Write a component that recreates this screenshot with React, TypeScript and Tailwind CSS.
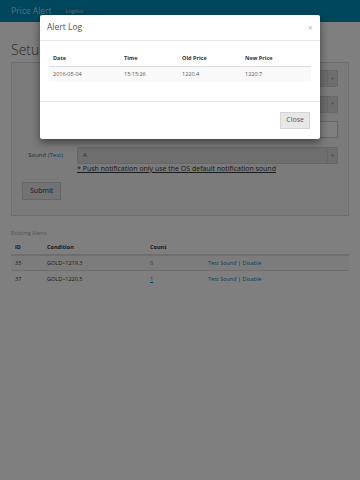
import React from "react"

const alerts = [
  { id: "35", cond: "GOLD<1219.3", count: "0" },
  { id: "37", cond: "GOLD>1220.5", count: "1" },
]

const Select = ({ value = "" }: { value?: string }) => (
  <div className="h-[17px] flex items-center justify-between bg-[#dcdcdc] border border-[#cfcfcf] rounded-[2px] pl-[5px] text-[6px] text-[#555]">
    <span>{value}</span>
    <span className="h-full w-[10px] flex items-center justify-center border-l border-[#cfcfcf] text-[4px] text-[#999]">▼</span>
  </div>
)

const Row = ({ label, children }: { label: React.ReactNode; children: React.ReactNode }) => (
  <div className="grid grid-cols-[45px_1fr] gap-[10px] items-center">
    <div className="text-right text-[6px] text-[#555] pr-[4px]">{label}</div>
    {children}
  </div>
)

export default function App() {
  return (
    <div className="relative w-[360px] h-[480px] overflow-hidden bg-white font-['Open_Sans',sans-serif]">
      <div className="h-[22px] bg-[#008cba] flex items-center px-[11px] gap-[14px]">
        <span className="text-[8.5px] text-white/70">Price Alert</span>
        <span className="text-[5.5px] text-white/70">Logout</span>
      </div>

      <div className="px-[11px]">
        <h1 className="text-[14px] font-light text-[#555] mt-[21px] mb-[5px] leading-none">Setup</h1>

        <div className="border border-[#ddd] bg-[#f6f6f6] px-[10px] pt-[7px] pb-[15px] flex flex-col gap-[8.7px]">
          <Row label=""><Select value="GOLD" /></Row>
          <Row label="Criteria"><Select value="<" /></Row>
          <Row label="Trigger"><div className="h-[17px] bg-white border border-[#ccc]" /></Row>
          <div className="grid grid-cols-[45px_1fr] gap-[10px]">
            <div className="text-right text-[6px] text-[#555] pr-[4px] pt-[4px]">
              Sound <span className="text-[#008cba]">(Test)</span>
            </div>
            <div className="flex flex-col">
              <Select value="A" />
              <span className="text-[7px] text-[#333] underline leading-[9px]">* Push notification only use the OS default notification sound</span>
            </div>
          </div>
          <div className="flex">
            <button className="h-[18px] px-[7px] bg-[#e7e7e7] border border-[#ccc] text-[7px] text-[#333] leading-none">Submit</button>
          </div>
        </div>

        <div className="mt-[14px] text-[5.5px] text-[#aaa] leading-[7px]">Existing Alerts</div>
        <table className="w-full mt-[4px] text-[5.5px] text-[#333] border-collapse">
          <thead>
            <tr className="border-b-2 border-[#ddd] h-[14px] text-left font-bold">
              <th className="pl-[4px] w-[32px]">ID</th>
              <th className="pl-[4px] w-[103px]">Condition</th>
              <th className="pl-[4px] w-[58px]">Count</th>
              <th></th>
            </tr>
          </thead>
          <tbody>
            {alerts.map((a, i) => (
              <tr key={a.id} className={`h-[16px] border-t border-[#ddd] ${i === 0 ? "bg-[#f9f9f9]" : ""}`}>
                <td className="pl-[4px]">{a.id}</td>
                <td className="pl-[4px]">{a.cond}</td>
                <td className={`pl-[4px] text-[#008cba] ${i === 1 ? "underline" : ""}`}>{a.count}</td>
                <td className="pl-[4px] text-[#008cba]">Test Sound <span className="text-[#333]">|</span> Disable</td>
              </tr>
            ))}
          </tbody>
        </table>
      </div>

      <div className="absolute inset-0 bg-black/50" />

      <div className="absolute left-[40px] top-[15px] w-[280px] bg-white rounded-[2px] shadow-[0_3px_9px_rgba(0,0,0,0.5)]">
        <div className="h-[26px] flex items-center justify-between px-[7px] border-b border-[#e5e5e5]">
          <span className="text-[8.5px] text-[#555]">Alert Log</span>
          <span className="text-[9px] text-[#bbb] leading-none">×</span>
        </div>
        <div className="px-[9px] pt-[9px] pb-[19px]">
          <table className="w-full text-[5.5px] text-[#333] border-collapse">
            <thead>
              <tr className="h-[16px] border-b border-[#ddd] text-left font-bold">
                <th className="pl-[4px] w-[71px]">Date</th>
                <th className="pl-[4px] w-[58px]">Time</th>
                <th className="pl-[4px] w-[63px]">Old Price</th>
                <th className="pl-[4px]">New Price</th>
              </tr>
            </thead>
            <tbody>
              <tr className="h-[16px] bg-[#f9f9f9] text-[#555]">
                <td className="pl-[4px]">2016-05-04</td>
                <td className="pl-[4px]">15:15:26</td>
                <td className="pl-[4px]">1220.4</td>
                <td className="pl-[4px]">1220.7</td>
              </tr>
            </tbody>
          </table>
        </div>
        <div className="border-t border-[#e5e5e5] flex justify-end px-[10px] pt-[10px] pb-[10px]">
          <button className="h-[17px] px-[5px] bg-[#e7e7e7] border border-[#d5d5d5] text-[7px] text-[#555]">Close</button>
        </div>
      </div>
    </div>
  )
}
